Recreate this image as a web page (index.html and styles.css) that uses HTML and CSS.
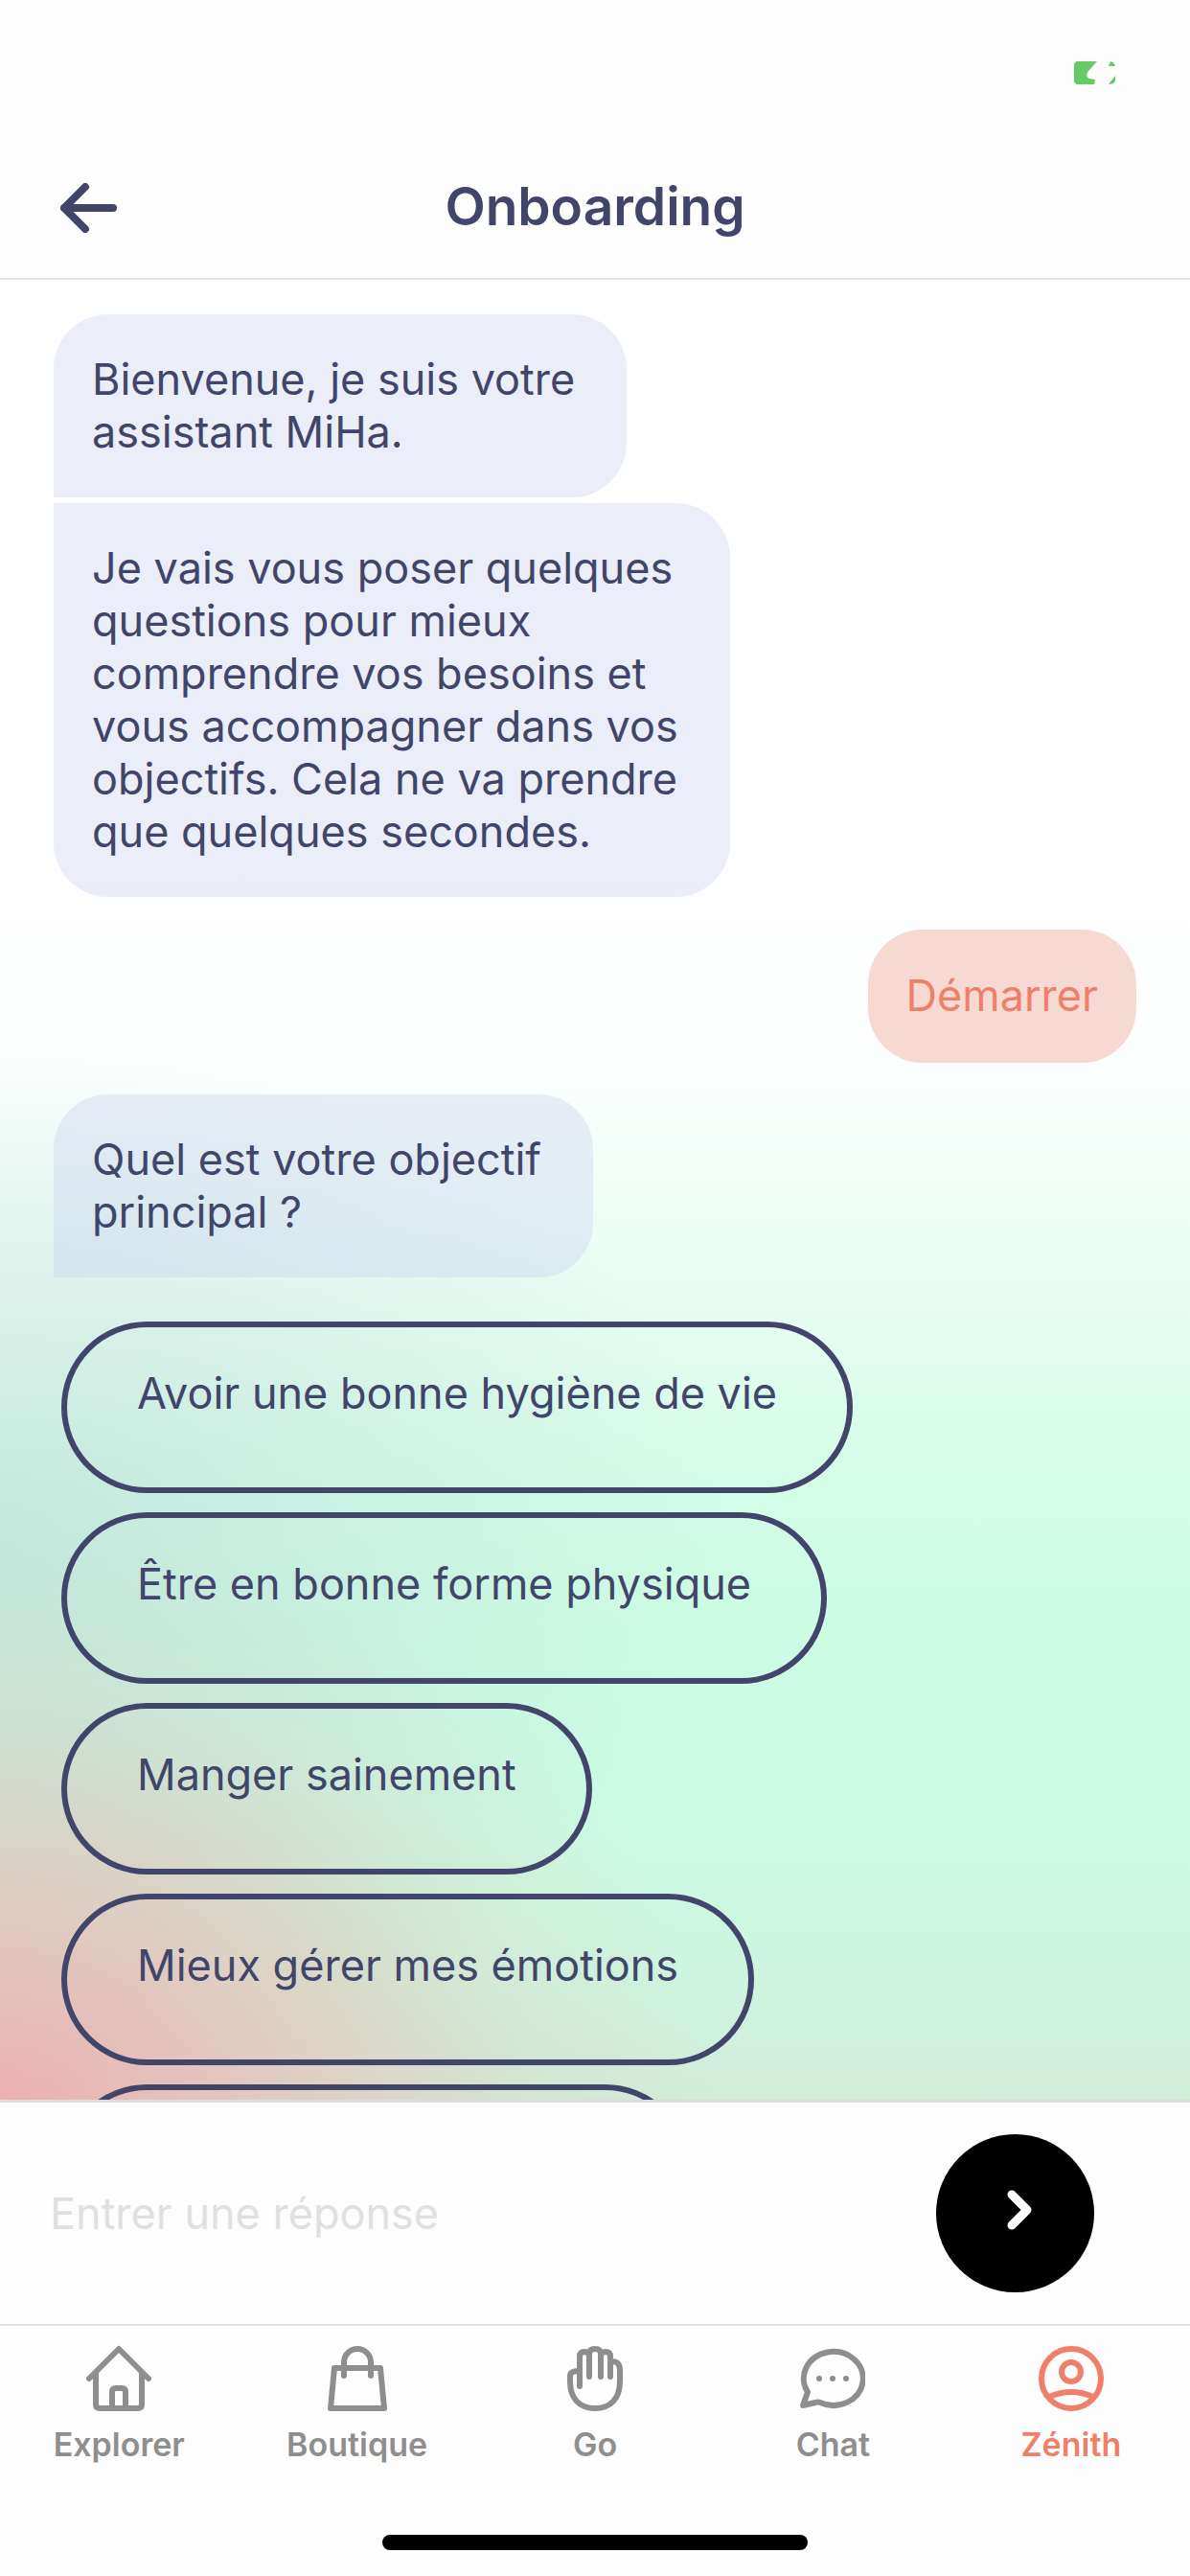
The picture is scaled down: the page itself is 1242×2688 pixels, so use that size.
FILE: index.html
```html
<!DOCTYPE html>
<html lang="fr">
<head>
    <meta charset="UTF-8">
    <meta name="viewport" content="width=device-width, initial-scale=1.0">
    <title>Onboarding</title>
    <link rel="stylesheet" href="styles.css">
</head>
<body>
    <div class="status-bar">
        <svg class="battery" viewBox="0 0 43 24" aria-hidden="true">
            <path d="M4 0H24L15 10Q11 15 16 18L22 19L21 24H4Q0 24 0 20V4Q0 0 4 0Z"/>
            <path d="M38 0Q42 1 43 5H36Z"/>
            <path d="M43 15V20Q42 24 36 24Z"/>
        </svg>
    </div>

    <header class="header">
        <button type="button" class="back" aria-label="Retour">
            <svg viewBox="0 0 60 52"><path d="M27 4L5 26L27 48M5 26H56"/></svg>
        </button>
        <h1>Onboarding</h1>
    </header>

    <main class="chat">
        <p class="bubble first">Bienvenue, je suis votre<br>assistant MiHa.</p>
        <p class="bubble last">Je vais vous poser quelques<br>questions pour mieux<br>comprendre vos besoins et<br>vous accompagner dans vos<br>objectifs. Cela ne va prendre<br>que quelques secondes.</p>
        <p class="bubble reply">Démarrer</p>
        <p class="bubble first">Quel est votre objectif<br>principal ?</p>

        <div class="options">
            <button type="button" class="option">Avoir une bonne hygiène de vie</button>
            <button type="button" class="option">Être en bonne forme physique</button>
            <button type="button" class="option">Manger sainement</button>
            <button type="button" class="option">Mieux gérer mes émotions</button>
            <button type="button" class="option next" aria-label="Autre objectif"></button>
        </div>
    </main>

    <form class="answer">
        <input type="text" placeholder="Entrer une réponse" aria-label="Entrer une réponse">
        <button type="button" class="send" aria-label="Envoyer">
            <svg viewBox="0 0 165 165"><path d="M79 63L95 79L79 95"/></svg>
        </button>
    </form>

    <nav class="tabs">
        <a href="#explorer">
            <svg viewBox="0 0 68 70"><path d="M3 35L34 4L65 35M10 29V62Q10 66 14 66H54Q58 66 58 62V29M27 66V49Q27 45 31 45H37Q41 45 41 49V66"/></svg>
            Explorer
        </a>
        <a href="#boutique">
            <svg viewBox="0 0 68 70"><path d="M10 24H58L62 66H6ZM20 32V18A14 14 0 0 1 48 18V32"/></svg>
            Boutique
        </a>
        <a href="#go">
            <svg viewBox="0 0 68 70"><path d="M18 43V12Q18 7 23 7Q28 7 28 12V33V9Q28 4 34 4Q40 4 40 9V33V12Q40 7 45 7Q50 7 50 12V33V17Q60 16 60 26V38C60 56 50 66 34 66C18 66 8 56 8 38V32Q8 27 18 27"/></svg>
            Go
        </a>
        <a href="#chat">
            <svg viewBox="0 0 68 70"><path d="M3 63L8 49A31 28 0 1 1 21 60Q19 59 16 60Z"/><g class="dots"><circle cx="20" cy="35" r="3"/><circle cx="34" cy="35" r="3"/><circle cx="48" cy="35" r="3"/></g></svg>
            Chat
        </a>
        <a href="#zenith" class="active">
            <svg viewBox="0 0 68 70"><circle cx="34" cy="35" r="31"/><circle cx="34" cy="28" r="10"/><path d="M11 54Q34 44 57 54"/></svg>
            Zénith
        </a>
    </nav>
    <div class="home-indicator"></div>
</body>
</html>
```

FILE: styles.css
```css
* {
    box-sizing: border-box;
}

body {
    margin: 0;
    height: 100vh;
    display: flex;
    flex-direction: column;
    overflow: hidden;
    font-family: Inter, "Liberation Sans", sans-serif;
    font-size: 45px;
    line-height: 55px;
    color: #414569;
    background-color: #fdfdfd;
}

button {
    font: inherit;
    color: inherit;
    background: none;
    border: none;
    padding: 0;
    cursor: pointer;
}

svg {
    display: block;
    fill: none;
    stroke: currentColor;
    stroke-width: 6;
    stroke-linecap: round;
    stroke-linejoin: round;
}

/* top */
.status-bar {
    display: flex;
    justify-content: flex-end;
    height: 144px;
    padding: 64px 78px 0;
}

.battery {
    width: 43px;
    height: 24px;
    fill: #65cb66;
    stroke: none;
}

.header {
    display: grid;
    grid-template-columns: 60px 1fr 60px;
    align-items: center;
    height: 148px;
    padding: 0 62px;
    border-bottom: 2px solid #e2e2e4;
}

.back svg {
    width: 60px;
    height: 52px;
    stroke-width: 8;
}

.header h1 {
    margin: 0 0 4px;
    font-size: 55px;
    font-weight: 600;
    text-align: center;
}

/* conversation */
.chat {
    flex: 1;
    min-height: 0;
    overflow: hidden;
    display: flex;
    flex-direction: column;
    align-items: flex-start;
    padding: 36px 56px 0;
    background:
        radial-gradient(ellipse 60% 32% at 0% 101%, rgba(240, 168, 170, 0.9), rgba(236, 180, 174, 0.5) 45%, rgba(226, 200, 186, 0.2) 75%, rgba(220, 210, 190, 0)),
        radial-gradient(ellipse 62% 28% at 0% 70%, rgba(182, 208, 210, 0.48), rgba(182, 208, 210, 0.25) 50%, rgba(182, 208, 210, 0)),
        linear-gradient(#fefefe 32%, #fafefc 44%, #e6fdf2 56%, #d4fde8 66%, #ccfde4 74%, #cbfbe3 84%, #cdf4df 94%, #d2ebd9 101%);
}

.bubble {
    flex-shrink: 0;
    margin: 0;
    padding: 40px 54px 41px 40px;
    border-radius: 57px;
    background-color: rgba(196, 202, 238, 0.32);
}

.first {
    border-bottom-left-radius: 0;
}

.last {
    margin-top: 6px;
    border-top-left-radius: 0;
}

.reply {
    align-self: flex-end;
    margin: 34px 0 33px;
    padding: 41px 40px 43px;
    color: #ef7f69;
    background-color: #f6d9d3;
}

.options {
    align-self: stretch;
    display: flex;
    flex-direction: column;
    align-items: flex-start;
    gap: 20px;
    padding: 46px 8px 0;
}

.option {
    padding: 41px 73px 71px;
    border: 6px solid #414569;
    border-radius: 90px;
}

.next {
    width: 59%;
    height: 179px;
}

/* answer */
.answer {
    display: flex;
    align-items: center;
    justify-content: space-between;
    height: 234px;
    padding: 0 100px 0 52px;
    border-top: 3px solid #dcdcdc;
}

.answer input {
    flex: 1;
    min-width: 0;
    padding: 0;
    border: none;
    outline: none;
    font: inherit;
    color: inherit;
    background: none;
}

.answer input::placeholder {
    color: #e0e0e0;
    opacity: 1;
}

.send {
    width: 165px;
    height: 165px;
    border-radius: 50%;
    background-color: #000;
    color: #fff;
}

.send svg {
    stroke-width: 9;
}

/* tabs */
.tabs {
    display: flex;
    height: 220px;
    padding-top: 20px;
    border-top: 2px solid #e2e2e4;
}

.tabs a {
    flex: 1;
    display: flex;
    flex-direction: column;
    align-items: center;
    gap: 14px;
    font-size: 34px;
    font-weight: 600;
    line-height: 40px;
    color: #8e8e8e;
    text-decoration: none;
}

.tabs svg {
    width: 68px;
    height: 70px;
}

.tabs .dots {
    fill: currentColor;
    stroke: none;
}

.tabs .active {
    color: #ef7f69;
}

.home-indicator {
    width: 444px;
    height: 16px;
    margin: 0 auto 27px;
    border-radius: 8px;
    background-color: #000;
}
```
